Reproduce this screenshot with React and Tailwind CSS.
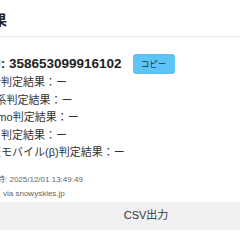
export default function App() {
  const rows = [
    "総合判定結果：ー",
    "UQ系判定結果：ー",
    "ahamo判定結果：ー",
    "ＳＢ判定結果：ー",
    "楽天モバイル(β)判定結果：ー",
  ];
  return (
    <div className="w-[240px] h-[240px] overflow-hidden bg-white font-['Liberation_Sans','Noto_Sans_CJK_JP',sans-serif] text-[#333]">
      <div className="h-[37px] pt-[5px] flex items-center border-b border-[#e8e8e8] whitespace-nowrap">
        <span className="-ml-[49px] text-[14px] font-bold text-[#222]">判定結果</span>
      </div>
      <div className="-ml-[21px] whitespace-nowrap">
        <div className="mt-[17px] h-[20px] flex items-center">
          <span className="-ml-[6px] text-[13.5px] font-bold text-[#222]">IMEI: 358653099916102</span>
          <button className="ml-[11px] h-[20px] w-[42px] rounded-[3px] bg-[#5ec4f6] text-[8.5px] text-[#1c3550] flex items-center justify-center">
            コピー
          </button>
        </div>
        <div className="text-[11px] leading-[17.5px]">
          {rows.map((r) => (
            <div key={r}>{r}</div>
          ))}
        </div>
        <div className="mt-[11px] text-[8px] leading-[14px] text-[#666]">
          <div className="ml-[2px]">取得時: 2025/12/01 13:49:49</div>
          <div className="ml-[24px]">via snowyskies.jp</div>
        </div>
      </div>
      <div className="mt-[1px] h-[28px] bg-[#f1f1f3] flex items-center justify-center pl-[52px] text-[11px] text-[#333]">
        CSV出力
      </div>
    </div>
  );
}
